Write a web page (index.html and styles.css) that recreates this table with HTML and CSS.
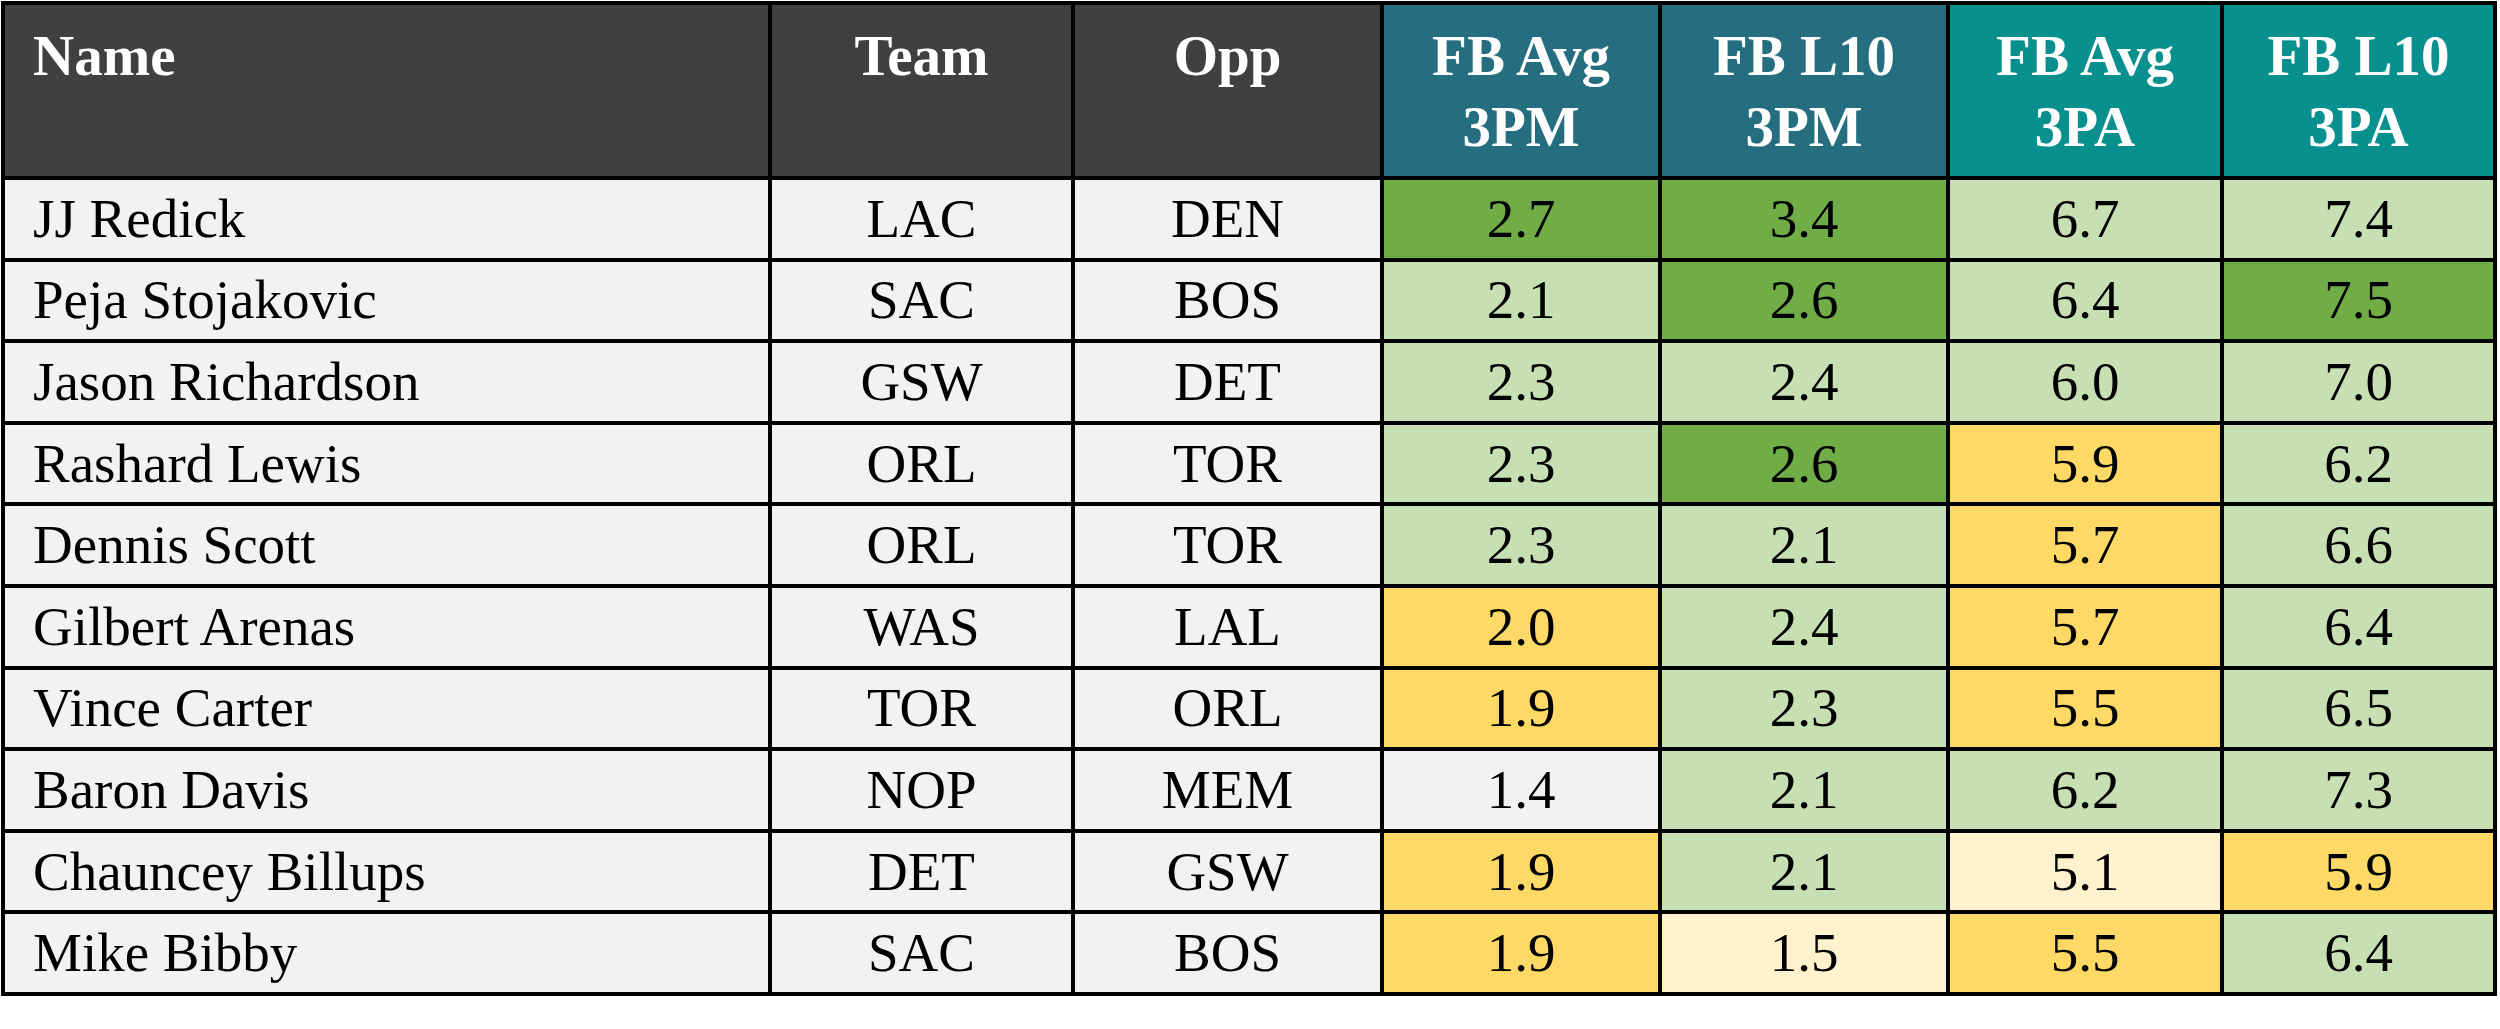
FILE: index.html
```html
<!DOCTYPE html>
<html>
<head>
<meta charset="utf-8">
<link rel="stylesheet" href="styles.css">
</head>
<body>
<table class="stats">
  <colgroup>
    <col class="c-name"><col class="c-team"><col class="c-opp">
    <col class="c-a"><col class="c-b"><col class="c-c"><col class="c-d">
  </colgroup>
  <thead>
    <tr>
      <th class="h-dark left">Name</th>
      <th class="h-dark">Team</th>
      <th class="h-dark">Opp</th>
      <th class="h-blue">FB Avg<br>3PM</th>
      <th class="h-blue">FB L10<br>3PM</th>
      <th class="h-teal">FB Avg<br>3PA</th>
      <th class="h-teal">FB L10<br>3PA</th>
    </tr>
  </thead>
  <tbody>
    <tr><td class="left">JJ Redick</td><td>LAC</td><td>DEN</td><td class="dg">2.7</td><td class="dg">3.4</td><td class="lg">6.7</td><td class="lg">7.4</td></tr>
    <tr><td class="left">Peja Stojakovic</td><td>SAC</td><td>BOS</td><td class="lg">2.1</td><td class="dg">2.6</td><td class="lg">6.4</td><td class="dg">7.5</td></tr>
    <tr><td class="left">Jason Richardson</td><td>GSW</td><td>DET</td><td class="lg">2.3</td><td class="lg">2.4</td><td class="lg">6.0</td><td class="lg">7.0</td></tr>
    <tr><td class="left">Rashard Lewis</td><td>ORL</td><td>TOR</td><td class="lg">2.3</td><td class="dg">2.6</td><td class="gd">5.9</td><td class="lg">6.2</td></tr>
    <tr><td class="left">Dennis Scott</td><td>ORL</td><td>TOR</td><td class="lg">2.3</td><td class="lg">2.1</td><td class="gd">5.7</td><td class="lg">6.6</td></tr>
    <tr><td class="left">Gilbert Arenas</td><td>WAS</td><td>LAL</td><td class="gd">2.0</td><td class="lg">2.4</td><td class="gd">5.7</td><td class="lg">6.4</td></tr>
    <tr><td class="left">Vince Carter</td><td>TOR</td><td>ORL</td><td class="gd">1.9</td><td class="lg">2.3</td><td class="gd">5.5</td><td class="lg">6.5</td></tr>
    <tr><td class="left">Baron Davis</td><td>NOP</td><td>MEM</td><td>1.4</td><td class="lg">2.1</td><td class="lg">6.2</td><td class="lg">7.3</td></tr>
    <tr><td class="left">Chauncey Billups</td><td>DET</td><td>GSW</td><td class="gd">1.9</td><td class="lg">2.1</td><td class="ly">5.1</td><td class="gd">5.9</td></tr>
    <tr><td class="left">Mike Bibby</td><td>SAC</td><td>BOS</td><td class="gd">1.9</td><td class="ly">1.5</td><td class="gd">5.5</td><td class="lg">6.4</td></tr>
  </tbody>
</table>
</body>
</html>
```
FILE: styles.css
```css
html, body {
  margin: 0;
  padding: 0;
  background: #ffffff;
}

.stats {
  margin: 1px 0 0 1px;
  border-collapse: collapse;
  table-layout: fixed;
  width: 2496px;
  font-family: "Liberation Serif", "Times New Roman", serif;
  color: #000;
}

.c-name { width: 767px; }
.c-team { width: 303px; }
.c-opp { width: 309px; }
.c-a { width: 278px; }
.c-b { width: 288px; }
.c-c { width: 274px; }
.c-d { width: 273px; }

.stats th,
.stats td {
  border: 4px solid #000;
  text-align: center;
  padding: 0;
  overflow: hidden;
  white-space: nowrap;
}

.stats thead tr { height: 175px; }
.stats tbody tr { height: 81.6px; }

.stats th {
  vertical-align: top;
  color: #fff;
  font-weight: bold;
  font-size: 57px;
  line-height: 71px;
  padding-top: 15px;
}

.stats td {
  vertical-align: middle;
  font-size: 55px;
  line-height: 60px;
  background: #f2f2f2;
}

.stats .left {
  text-align: left;
  padding-left: 28px;
}

.h-dark { background: #404040; }
.h-blue { background: #246e80; }
.h-teal { background: #08908f; }

.stats td.dg { background: #70ad47; }
.stats td.lg { background: #c6e0b4; }
.stats td.gd { background: #ffd966; }
.stats td.ly { background: #fff2cc; }
```
